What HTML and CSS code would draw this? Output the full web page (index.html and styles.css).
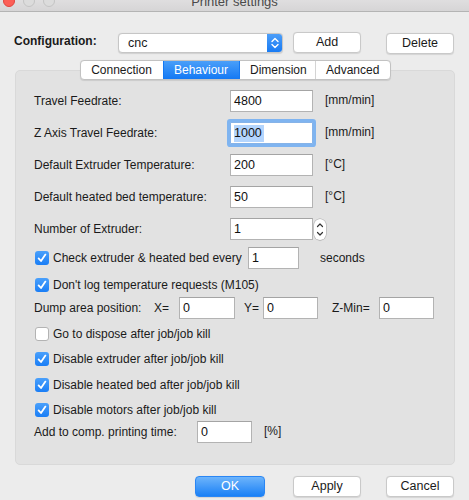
FILE: index.html
```html
<!DOCTYPE html>
<html>
<head>
<meta charset="utf-8">
<title>Printer settings</title>
<link rel="stylesheet" href="styles.css">
</head>
<body>
<div class="window">
  <div class="titlebar">
    <div class="lights">
      <span class="light red"></span>
      <span class="light"></span>
      <span class="light"></span>
    </div>
    <div class="title">Printer settings</div>
    <div></div>
  </div>

  <div class="config">
    <span class="config-label">Configuration:</span>
    <div class="popup">
      <span class="popup-text">cnc</span>
      <span class="popup-arrows">
        <svg width="16" height="20" viewBox="0 0 16 20"><path d="M5 8.5 L8 5.5 L11 8.5 M5 11.5 L8 14.5 L11 11.5" fill="none" stroke="#fff" stroke-width="1.4" stroke-linecap="round" stroke-linejoin="round"/></svg>
      </span>
    </div>
    <button class="btn btn-add">Add</button>
    <button class="btn btn-delete">Delete</button>
  </div>

  <div class="tabs">
    <span class="tab">Connection</span>
    <span class="tab active">Behaviour</span>
    <span class="tab">Dimension</span>
    <span class="tab">Advanced</span>
  </div>

  <div class="group">
    <div class="row field first">
      <span class="label">Travel Feedrate:</span>
      <span class="input w83">4800</span>
      <span class="unit">[mm/min]</span>
    </div>
    <div class="row field">
      <span class="label">Z Axis Travel Feedrate:</span>
      <span class="input w83 focus"><span class="sel">1000</span></span>
      <span class="unit">[mm/min]</span>
    </div>
    <div class="row field">
      <span class="label">Default Extruder Temperature:</span>
      <span class="input w83">200</span>
      <span class="unit">[°C]</span>
    </div>
    <div class="row field">
      <span class="label">Default heated bed temperature:</span>
      <span class="input w83">50</span>
      <span class="unit">[°C]</span>
    </div>
    <div class="row field">
      <span class="label">Number of Extruder:</span>
      <span class="input w83">1</span>
      <span class="stepper">
        <svg width="12" height="21" viewBox="0 0 12 21"><path d="M3.5 7.5 L6 5 L8.5 7.5 M3.5 13.5 L6 16 L8.5 13.5" fill="none" stroke="#333" stroke-width="1.2" stroke-linecap="round" stroke-linejoin="round"/></svg>
      </span>
    </div>
    <div class="row check-every">
      <span class="cb on"><svg width="14" height="14" viewBox="0 0 14 14"><path d="M3.6 7.4 L6 10 L10.4 3.6" fill="none" stroke="#fff" stroke-width="1.8" stroke-linecap="round" stroke-linejoin="round"/></svg></span>
      <span class="cb-label every-label">Check extruder &amp; heated bed every</span>
      <span class="input w51">1</span>
      <span class="seconds">seconds</span>
    </div>
    <div class="row cbrow log">
      <span class="cb on"><svg width="14" height="14" viewBox="0 0 14 14"><path d="M3.6 7.4 L6 10 L10.4 3.6" fill="none" stroke="#fff" stroke-width="1.8" stroke-linecap="round" stroke-linejoin="round"/></svg></span>
      <span class="cb-label">Don't log temperature requests (M105)</span>
    </div>
    <div class="row dump">
      <span class="dump-label">Dump area position:</span>
      <span class="axis ax-x">X=</span>
      <span class="input w56">0</span>
      <span class="axis ax-y">Y=</span>
      <span class="input w55">0</span>
      <span class="axis ax-z">Z-Min=</span>
      <span class="input w55">0</span>
    </div>
    <div class="row cbrow">
      <span class="cb"></span>
      <span class="cb-label">Go to dispose after job/job kill</span>
    </div>
    <div class="row cbrow">
      <span class="cb on"><svg width="14" height="14" viewBox="0 0 14 14"><path d="M3.6 7.4 L6 10 L10.4 3.6" fill="none" stroke="#fff" stroke-width="1.8" stroke-linecap="round" stroke-linejoin="round"/></svg></span>
      <span class="cb-label">Disable extruder after job/job kill</span>
    </div>
    <div class="row cbrow">
      <span class="cb on"><svg width="14" height="14" viewBox="0 0 14 14"><path d="M3.6 7.4 L6 10 L10.4 3.6" fill="none" stroke="#fff" stroke-width="1.8" stroke-linecap="round" stroke-linejoin="round"/></svg></span>
      <span class="cb-label">Disable heated bed after job/job kill</span>
    </div>
    <div class="row cbrow">
      <span class="cb on"><svg width="14" height="14" viewBox="0 0 14 14"><path d="M3.6 7.4 L6 10 L10.4 3.6" fill="none" stroke="#fff" stroke-width="1.8" stroke-linecap="round" stroke-linejoin="round"/></svg></span>
      <span class="cb-label">Disable motors after job/job kill</span>
    </div>
    <div class="row comp">
      <span class="comp-label">Add to comp. printing time:</span>
      <span class="input w55">0</span>
      <span class="unit">[%]</span>
    </div>
  </div>

  <div class="footer">
    <button class="btn btn-ok">OK</button>
    <button class="btn btn-apply">Apply</button>
    <button class="btn btn-cancel">Cancel</button>
  </div>
</div>
</body>
</html>
```

FILE: styles.css
```css
* { box-sizing: border-box; }
html, body {
  margin: 0;
  padding: 0;
  background: #ececec;
  overflow: hidden;
}
body {
  font-family: "Liberation Sans", Arial, sans-serif;
  font-size: 12px;
  color: #1a1a1a;
  width: 469px;
  height: 500px;
}
.window {
  display: flex;
  flex-direction: column;
}

/* title bar */
.titlebar {
  margin-top: -11px;
  height: 23px;
  display: grid;
  grid-template-columns: 1fr auto 1fr;
  align-items: center;
  background: linear-gradient(#e8e7e8, #d6d5d6);
  border-bottom: 1px solid #b4b4b4;
}
.lights {
  display: flex;
  gap: 8px;
  padding-left: 3px;
  padding-top: 1px;
}
.light {
  width: 12px;
  height: 12px;
  border-radius: 50%;
  background: #dcdcdc;
  border: 1px solid #c4c4c4;
}
.light.red {
  background: #fc5f57;
  border-color: #e0443e;
}
.title {
  font-size: 13px;
  color: #4a4a4a;
  padding-top: 3px;
}

/* configuration */
.config {
  display: flex;
  align-items: center;
  margin-top: 20px;
  padding-left: 14px;
  height: 21px;
}
.config-label {
  font-weight: bold;
  font-size: 12px;
  width: 104px;
  margin-top: -4px;
}
.popup {
  width: 165px;
  height: 20px;
  display: flex;
  background: #fff;
  border: 1px solid #c6c6c6;
  border-radius: 4px;
  box-shadow: 0 0.5px 1px rgba(0,0,0,0.12);
  overflow: hidden;
}
.popup-text {
  flex: 1;
  padding-left: 9px;
  line-height: 18px;
  font-size: 12.5px;
}
.popup-arrows {
  width: 16px;
  margin: -1px -1px -1px 0;
  height: 20px;
  background: linear-gradient(#4fa0f9, #1679f3);
  display: flex;
}
.btn {
  font-family: "Liberation Sans", Arial, sans-serif;
  font-size: 12.5px;
  color: #1a1a1a;
  background: #fff;
  border: 1px solid #c9c9c9;
  border-radius: 4px;
  box-shadow: 0 0.5px 1px rgba(0,0,0,0.1);
  height: 21px;
  width: 68px;
  padding: 0;
  line-height: 19px;
}
.btn-add { margin-left: 10px; }
.btn-delete { margin-left: 25px; margin-top: 2px; }

/* tabs */
.tabs {
  display: flex;
  align-self: center;
  margin-top: 7px;
  margin-bottom: -10px;
  position: relative;
  z-index: 1;
  background: #fff;
  border: 1px solid #c2c2c2;
  border-radius: 4px;
  height: 20px;
  overflow: hidden;
  box-shadow: 0 0.5px 1px rgba(0,0,0,0.1);
  margin-left: 2px;
}
.tab {
  padding: 0 11px 0 10px;
  line-height: 18px;
  font-size: 12px;
  border-left: 1px solid #d4d4d4;
  text-align: center;
}
.tab:first-child { border-left: none; width: 82px; }
.tab:nth-child(2) { width: 76px; }
.tab:nth-child(3) { width: 76px; }
.tab:nth-child(4) { width: 75px; }
.tab.active {
  background: linear-gradient(#4a9ff9, #1479f4);
  color: #fff;
  border-left-color: #1479f4;
}
.tab.active + .tab { border-left-color: #1479f4; }

/* group box */
.group {
  margin: 0 14px 0 15px;
  height: 395px;
  background: #e2e2e2;
  border: 1px solid #d9d9d9;
  border-radius: 5px;
  padding: 19px 0 0 18px;
  display: flex;
  flex-direction: column;
}
.row {
  display: flex;
  align-items: center;
  height: 22px;
}
.field { margin-top: 10px; }
.field.first { margin-top: 0; }
.label { width: 196px; }
.input {
  height: 22px;
  background: #fff;
  border: 1px solid #b3b3b3;
  border-top-color: #a4a4a4;
  padding-left: 3px;
  line-height: 20px;
  font-size: 12.5px;
  color: #111;
  display: flex;
  align-items: center;
}
.w83 { width: 83px; }
.w51 { width: 51px; }
.w56 { width: 56px; }
.w55 { width: 55px; }
.focus {
  border-color: #86b3e8;
  box-shadow: 0 0 0 3px #7fb4f0;
  border-radius: 1px;
}
.sel {
  background: #b4d5fd;
  line-height: 17px;
  padding-right: 2px;
}
.unit { margin-left: 12px; margin-top: -3px; }
.stepper {
  width: 12px;
  height: 21px;
  margin-left: 1px;
  background: #fff;
  border-radius: 6px;
  box-shadow: 0 0 0 0.5px #a9a9a9, 0 0.5px 1px rgba(0,0,0,0.2);
  display: flex;
}

.cb {
  width: 14px;
  height: 14px;
  margin-left: 1px;
  border-radius: 3px;
  background: #fff;
  border: 1px solid #b3b3b3;
  flex: none;
  display: flex;
}
.cb.on {
  background: linear-gradient(#4aa0fb, #1a7ef6);
  border: none;
}
.cb-label { margin-left: 4px; }
.check-every { margin-top: 7px; }
.every-label { width: 195px; }
.seconds { margin-left: 21px; }
.cbrow { margin-top: 3.5px; }
.log { margin-top: 5px; }
.dump { margin-top: 1px; }
.dump-label { width: 120px; }
.axis { flex: none; }
.ax-x { width: 25px; }
.ax-y { width: 19px; margin-left: 9px; }
.ax-z { width: 47px; margin-left: 14px; }
.comp { margin-top: 0; }
.comp-label { width: 163px; }

/* footer */
.footer {
  display: flex;
  justify-content: flex-end;
  padding-right: 15px;
  margin-top: 11px;
}
.btn-ok {
  width: 70px;
  color: #fff;
  border: 1px solid #2a86f4;
  background: linear-gradient(#6db4fb, #1a80f6);
}
.btn-apply { margin-left: 28px; }
.btn-cancel { margin-left: 25px; }
```
